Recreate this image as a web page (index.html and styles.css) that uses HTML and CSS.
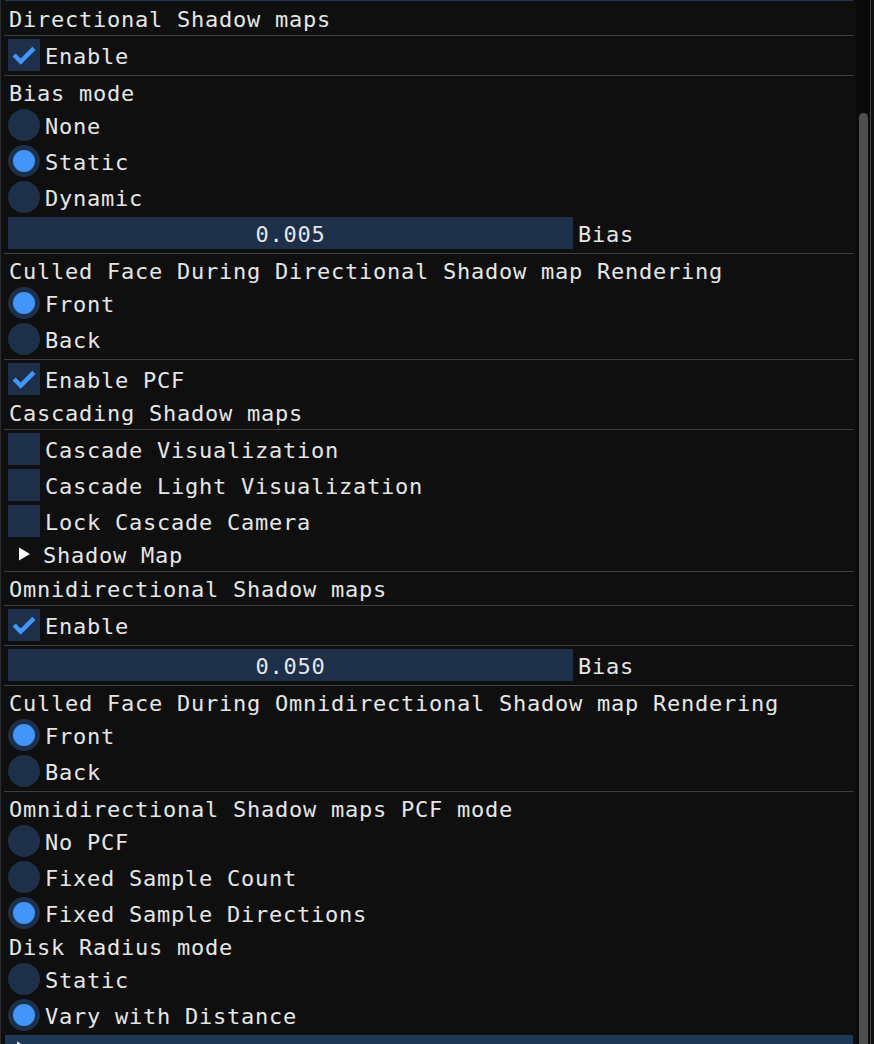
FILE: index.html
```html
<!DOCTYPE html>
<html>
<head>
<meta charset="utf-8">
<link rel="stylesheet" href="styles.css">
</head>
<body>
<div class="window">
  <div class="content">
    <div class="topbar"></div>
    <div class="text">Directional Shadow maps</div>
    <div class="sep"></div>
    <div class="row"><span class="box"><svg class="tick" viewBox="0 0 32 32"><path d="M6.1 16 L12.7 22.6 L25.9 9.4"/></svg></span><span class="label">Enable</span></div>
    <div class="sep"></div>
    <div class="text">Bias mode</div>
    <div class="row"><span class="radio"></span><span class="label">None</span></div>
    <div class="row"><span class="radio on"><span class="dot"></span></span><span class="label">Static</span></div>
    <div class="row"><span class="radio"></span><span class="label">Dynamic</span></div>
    <div class="row"><span class="drag">0.005</span><span class="label">Bias</span></div>
    <div class="sep"></div>
    <div class="text">Culled Face During Directional Shadow map Rendering</div>
    <div class="row"><span class="radio on"><span class="dot"></span></span><span class="label">Front</span></div>
    <div class="row"><span class="radio"></span><span class="label">Back</span></div>
    <div class="sep"></div>
    <div class="row"><span class="box"><svg class="tick" viewBox="0 0 32 32"><path d="M6.1 16 L12.7 22.6 L25.9 9.4"/></svg></span><span class="label">Enable PCF</span></div>
    <div class="text">Cascading Shadow maps</div>
    <div class="sep"></div>
    <div class="row"><span class="box"></span><span class="label">Cascade Visualization</span></div>
    <div class="row"><span class="box"></span><span class="label">Cascade Light Visualization</span></div>
    <div class="row"><span class="box"></span><span class="label">Lock Cascade Camera</span></div>
    <div class="tree"><svg class="arrow" viewBox="0 0 34 26"><polygon points="11,6.5 22,13 11,19.5"/></svg><span class="tlabel">Shadow Map</span></div>
    <div class="sep"></div>
    <div class="text">Omnidirectional Shadow maps</div>
    <div class="sep"></div>
    <div class="row"><span class="box"><svg class="tick" viewBox="0 0 32 32"><path d="M6.1 16 L12.7 22.6 L25.9 9.4"/></svg></span><span class="label">Enable</span></div>
    <div class="sep"></div>
    <div class="row"><span class="drag">0.050</span><span class="label">Bias</span></div>
    <div class="sep"></div>
    <div class="text">Culled Face During Omnidirectional Shadow map Rendering</div>
    <div class="row"><span class="radio on"><span class="dot"></span></span><span class="label">Front</span></div>
    <div class="row"><span class="radio"></span><span class="label">Back</span></div>
    <div class="sep"></div>
    <div class="text">Omnidirectional Shadow maps PCF mode</div>
    <div class="row"><span class="radio"></span><span class="label">No PCF</span></div>
    <div class="row"><span class="radio"></span><span class="label">Fixed Sample Count</span></div>
    <div class="row"><span class="radio on"><span class="dot"></span></span><span class="label">Fixed Sample Directions</span></div>
    <div class="text">Disk Radius mode</div>
    <div class="row"><span class="radio"></span><span class="label">Static</span></div>
    <div class="row"><span class="radio on"><span class="dot"></span></span><span class="label">Vary with Distance</span></div>
    <div class="header"><svg class="harrow" viewBox="0 0 34 32"><polygon points="12,6.5 23,13 12,19.5"/></svg></div>
  </div>
  <div class="scrollbar"><div class="grab"></div></div>
</div>
</body>
</html>
```
FILE: styles.css
```css
* { box-sizing: border-box; }
html, body {
  margin: 0;
  padding: 0;
  background: #0f0f0f;
}
body {
  width: 874px;
  height: 1044px;
  overflow: hidden;
  font-family: "DejaVu Sans Mono", "Liberation Mono", monospace;
  font-size: 22px;
  letter-spacing: 0.757px;
  color: #e6e6e6;
}
.window {
  display: flex;
  width: 871px;
  height: 1044px;
  border-left: 1px solid #2b2b30;
  border-right: 1px solid #44444a;
  background: #0f0f0f;
}
.content {
  flex: 1;
  display: flex;
  flex-direction: column;
  padding: 0 3px 0 7px;
  overflow: hidden;
  min-width: 0;
}
.content > * { flex-shrink: 0; margin-bottom: 4px; }
.topbar {
  height: 1px;
  margin-left: -3px;
  background: #1e3957;
}
.sep {
  height: 1px;
  margin-left: -4px;
  margin-bottom: 3px !important;
  background: #3d3d44;
}
.text {
  height: 26px;
  line-height: 29px;
  padding-left: 1px;
  white-space: pre;
}
.row {
  height: 32px;
  display: flex;
  align-items: flex-start;
  gap: 4px;
}
.label {
  line-height: 35px;
  padding-left: 1px;
  white-space: pre;
}
.box {
  width: 32px;
  height: 32px;
  background: #1d2f49;
  display: block;
}
.tick {
  display: block;
  width: 32px;
  height: 32px;
  fill: none;
  stroke: #4296fa;
  stroke-width: 4.4;
  stroke-linejoin: miter;
}
.radio {
  width: 32px;
  height: 32px;
  border-radius: 50%;
  background: #1d2f49;
  display: flex;
  align-items: center;
  justify-content: center;
}
.dot {
  width: 22px;
  height: 22px;
  border-radius: 50%;
  background: #4296fa;
}
.drag {
  width: 565px;
  height: 32px;
  background: #1d2f49;
  text-align: center;
  line-height: 35px;
  white-space: pre;
}
.tree {
  height: 26px;
  display: flex;
  align-items: flex-start;
}
.arrow {
  width: 34px;
  height: 26px;
  display: block;
  fill: #ffffff;
}
.tlabel {
  line-height: 29px;
  padding-left: 1px;
  white-space: pre;
}
.header {
  height: 32px;
  margin-left: -3px;
  background: #1e3957;
  display: flex;
}
.harrow {
  width: 34px;
  height: 32px;
  display: block;
  fill: #ffffff;
}
.scrollbar {
  width: 14px;
  background: #0a0a0a;
  display: flex;
  flex-direction: column;
  padding-top: 113px;
  padding-left: 3px;
}
.grab {
  width: 9px;
  flex: 1;
  background: #4f4f4f;
  border-radius: 5px 5px 0 0;
}
```
